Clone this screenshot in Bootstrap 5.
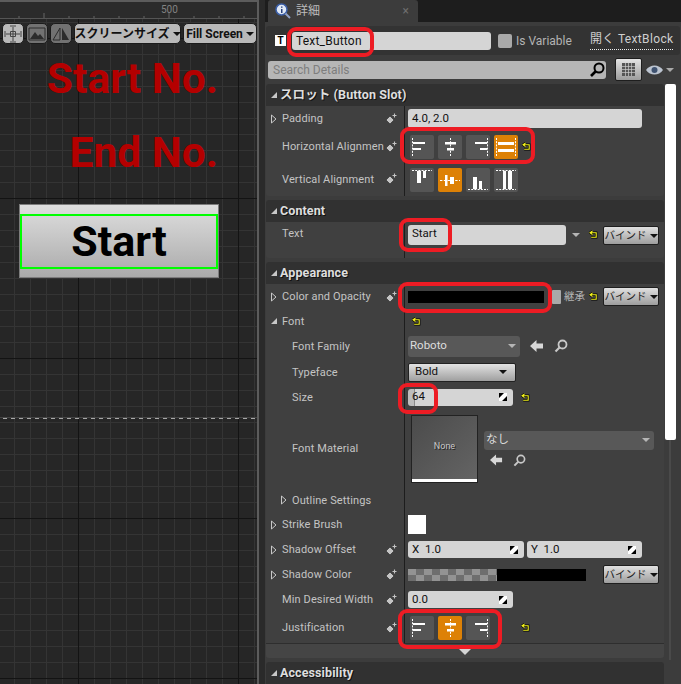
<!DOCTYPE html>
<html lang="ja">
<head>
<meta charset="UTF-8">
<title>UMG Details</title>
<link rel="stylesheet" href="https://cdn.jsdelivr.net/npm/bootstrap@5.3.2/dist/css/bootstrap.min.css">
<style>
html, body { height: 684px; overflow: hidden; }
body { background: #3c3c3c; font-family: Roboto, "Noto Sans CJK JP", sans-serif; font-size: 11px; color: #c8c8c8; position: relative; }

/* designer canvas */
.designer { width: 265px; height: 684px; background: #2a2a2a; flex: none; }
.canvas { width: 257px; height: 684px; position: relative; background-color: #262626; border-top: 2px solid #5c5c5c; }
.gridlayer { position: absolute; inset: 0;
  background-image:
    linear-gradient(#131313 1px, transparent 1px), linear-gradient(90deg, #131313 1px, transparent 1px),
    linear-gradient(#343434 1px, transparent 1px), linear-gradient(90deg, #343434 1px, transparent 1px);
  background-size: 160px 160px, 160px 160px, 16px 16px, 16px 16px;
  background-position: 0 36px, 78px 0, 0 4px, 14px 0; }
.split-bar { width: 2px; background: #5c5c5c; flex: none; }
.ruler { position: relative; height: 17px; background: #2b2b2b; border-bottom: 1px solid #555; display: block; width: 257px; }
.ruler text { font: 10px Roboto, sans-serif; fill: #828282; }
.tools { position: relative; padding: 4px 0 0 2px; gap: 2px; }
.tool { height: 21px; border-radius: 5px; background: #b9b9b9; border: 1px solid #1b1b1b; color: #111; font-weight: 700; font-size: 12px; white-space: nowrap; }
.tool-ic { width: 22px; }
.tool-dim { background: #727272; }
.tool-w1 { width: 107px; }
.tool-w2 { width: 74px; }
.caret-b { width: 0; height: 0; border-left: 4px solid transparent; border-right: 4px solid transparent; border-top: 4px solid #111; margin-left: 3px; flex: none; }
.canvas-title { position: absolute; right: 39px; color: #b40000; font-weight: 700; font-size: 42.5px; line-height: 48px; white-space: nowrap; }
.ct-a { top: 53px; }
.ct-b { top: 127px; }
.preview-btn { position: absolute; left: 19px; top: 202px; width: 200px; height: 74px; border: 1px solid #7c7c7c; background: linear-gradient(#dedede, #aaa); }
.preview-sel { position: absolute; left: 0; top: 9px; width: 198px; height: 55px; border: 2px solid #00ff00; color: #000; font-weight: 700; font-size: 43px; }
.dashline { position: absolute; left: 3px; right: 1px; top: 416px; height: 1px; background-image: linear-gradient(90deg, #a8a8a8 4px, transparent 4px); background-size: 8px 1px; }
.dashtop { position: absolute; left: 0; right: 0; top: 415px; height: 1px; background: #454545; }

/* details panel */
.panel { width: 416px; flex: none; }
.tabbar { height: 22px; background: #1d1d1d; padding-left: 3px; }
.dtab { width: 150px; height: 22px; background: #3c3c3c; border-radius: 3px 3px 0 0; padding-left: 7px; color: #bdbdbd; font-size: 12px; gap: 5px; }
.dtab-x { margin-left: auto; margin-right: 9px; color: #6e6e6e; font-size: 12px; }
.namebar { height: 29px; margin: 4px 1px 0 1px; background: #333; border-radius: 3px; padding-left: 9px; }
.t-ic { width: 11px; height: 11px; background: #fff; color: #000; font: 700 10px/11px "Liberation Sans", sans-serif; text-align: center; flex: none; }
.field { background: #d5d5d5; color: #111; border-radius: 3px; font-size: 11.5px; padding-left: 4px; white-space: nowrap; }
.f-name { width: 199px; height: 18px; margin-left: 6px; padding-left: 4px; font-size: 12px; letter-spacing: .2px; }
.chk { width: 14px; height: 14px; background: #a9a9a9; border-radius: 2px; margin-left: 7px; flex: none; }
.isvar { margin-left: 4px; font-size: 12px; color: #b4b4b4; }
.opener { margin-left: 18px; font-size: 12px; color: #cfcfcf; border-bottom: 1px dotted #eee; height: 19px; line-height: 17px; white-space: nowrap; letter-spacing: .35px; }
.searchbar { height: 29px; padding: 0 0 0 3px; }
.searchbox { width: 338px; height: 18px; background: #b6b6b6; border-radius: 3px; color: #7e7e7e; font-size: 12px; padding-left: 5px; }
.searchbox svg { margin-left: auto; margin-right: 1px; }
.viewbtn { width: 27px; height: 23px; margin-left: 9px; border: 1px solid #1e1e1e; background: linear-gradient(#e4e4e4, #9c9c9c); border-radius: 2px; }
.eyeicon { margin-left: 4px; }
.section { width: 398px; margin-left: 1px; margin-bottom: 4px; background: #404040; border-radius: 3px; }
.sec-head { height: 22px; background: #313131; color: #dedede; font-weight: 700; font-size: 12.5px; padding-left: 4px; border-radius: 3px 3px 0 0; gap: 2px; letter-spacing: .1px; text-shadow: 1px 1px 0 #111; }
.prop { display: flex; }
.pn { width: 138px; flex: none; display: flex; align-items: center; padding-left: 4px; }
.pn-deep { padding-left: 14px; }
.pn-label { flex: 1; min-width: 0; padding-top: 1px; white-space: nowrap; letter-spacing: .12px; color: #c4c4c4; }
.pn-label.lbl-low { padding-top: 3px; }
.arr { width: 12px; flex: none; line-height: 0; }
.dia { flex: none; margin: 0 7px 0 0; }
.pv { flex: 1; border-left: 1px solid #1d1d1d; padding-left: 3px; display: flex; align-items: center; min-width: 0; }
.pn.pn-top, .pv.pn-top { padding-top: 3px; align-items: flex-start; }
.h-a { height: 25px; } .h-b { height: 31px; } .h-c { height: 34px; } .h-c2 { height: 36px; } .h-d { height: 24px; } .h-e { height: 26px; } .h-f { height: 77px; } .h-h { height: 15px; }
.alignbtn { width: 24px; height: 24px; background: #555; border-radius: 2px; margin-right: 4px; flex: none; }
.alignbtn.on { background: #dd8106; }
.aligns { padding-left: 5px; }
.v-nudge { padding-top: 2px; }
.reset { flex: none; }
.reset-just { margin-left: 27px; }
.bindbtn { width: 56px; height: 19px; background: linear-gradient(#e0e0e0, #9d9d9d); border: 1px solid #1e1e1e; border-radius: 2px; color: #222; font-size: 10.5px; flex: none; white-space: nowrap; }
.f-pad { width: 234px; height: 19px; }
.f-text { width: 158px; height: 20px; }
.f-size { background: linear-gradient(90deg, #bdbdbd 6px, #8c8c8c 6px, #8c8c8c 7px, #d5d5d5 7px); }
.sm-caret { width: 0; height: 0; border-left: 4px solid transparent; border-right: 4px solid transparent; border-top: 4px solid #b5b5b5; flex: none; }
.caret-gap { margin: 8px 9px 0 6px; }
.reset-top { margin-top: 5px; }
.ml-5px { margin-left: 5px; }
.mt-1px { margin-top: 1px; }
.ml-17 { margin-left: 17px; }
.colorbar { width: 136px; height: 12px; background: #000; flex: none; }
.chk-sm { width: 9px; height: 14px; background: #a9a9a9; border-radius: 1px; margin-left: 8px; flex: none; }
.inherit { margin-left: 3px; color: #b4b4b4; font-size: 10.5px; white-space: nowrap; }
.sel-dark { background: #585858; color: #ddd; border-radius: 3px; padding: 0 4px 0 2px; font-size: 11.5px; }
.sel-a { width: 112px; height: 21px; }
.sel-b { width: 170px; height: 19px; }
.sel-light { width: 108px; height: 19px; margin-top: 1px; background: linear-gradient(#e2e2e2, #9f9f9f); border-radius: 2px; color: #111; font-size: 11.5px; padding: 0 8px 0 6px; border: 1px solid #222; }
.f-num { width: 105px; height: 17px; }
.f-half { width: 116px; height: 17px; margin-right: 3px; }
.f-half-b { width: 115px; height: 17px; }
.sz-ic { margin-left: auto; margin-right: 5px; flex: none; }
.thumb { width: 65px; height: 66px; margin-left: 4px; background: linear-gradient(135deg, #4b4b4b, #646464); box-shadow: 0 0 0 1px #222; border-bottom: 3px solid #fff; color: #c8c8c8; font-size: 9px; flex: none; text-shadow: 1px 1px 0 #222; }
.mat-side { margin-left: 7px; }
.mat-icons { margin-top: 4px; padding-left: 6px; gap: 10px; }
.ic-gap { margin-left: 10px; }
.swatch { width: 18px; height: 19px; background: #fff; }
.checker { width: 178px; height: 12px; background: #000; flex: none; }
.checker-b { width: 89px; height: 12px; background-image: conic-gradient(#6e6e6e 25%, #939393 0 50%, #6e6e6e 0 75%, #939393 0); background-size: 16px 12px; }
.expand { border-top: 1px solid #2e2e2e; background: #454545; border-radius: 0 0 3px 3px; padding-top: 2px; }
.exp-ar { width: 0; height: 0; border-left: 6px solid transparent; border-right: 6px solid transparent; border-top: 6px solid #d4d4d4; }
.scrolltrack { position: absolute; left: 669px; top: 84px; width: 2px; height: 576px; background: #4a4a4a; }
.scrollthumb { position: absolute; left: 665px; top: 84px; width: 11px; height: 356px; background: #fff; border-radius: 2px; }
.mark-red { position: absolute; border: 4px solid #ed1c24; border-radius: 9px; pointer-events: none; }
.m1 { left: 287px; top: 27px; width: 87px; height: 30px; }
.m2 { left: 400px; top: 127px; width: 135px; height: 37px; }
.m3 { left: 399px; top: 218px; width: 53px; height: 34px; }
.m4 { left: 398px; top: 282px; width: 154px; height: 31px; }
.m5 { left: 398px; top: 383px; width: 40px; height: 31px; }
.m6 { left: 398px; top: 609px; width: 104px; height: 40px; }
</style>
</head>
<body>
<svg width="0" height="0" class="position-absolute">
  <defs>
    <symbol id="al-left" viewBox="0 0 24 24"><path d="M2.500 3V21" stroke="#fff" stroke-dasharray="2 1.200" fill="none"/><path d="M3 7h12v2H3zM3 13h8v2H3z" fill="#fff"/></symbol>
    <symbol id="al-center" viewBox="0 0 24 24"><path d="M12.500 3V21" stroke="#fff" stroke-dasharray="2 1.200" fill="none"/><path d="M7 7h11v2.500H7zM9 13h7v2.500H9z" fill="#fff"/></symbol>
    <symbol id="al-right" viewBox="0 0 24 24"><path d="M21.500 3V21" stroke="#fff" stroke-dasharray="2 1.200" fill="none"/><path d="M9 7h12v2H9zM14 13h7v2h-7z" fill="#fff"/></symbol>
    <symbol id="al-fill" viewBox="0 0 24 24"><path d="M2.500 3V21M21.500 3V21" stroke="#fff" stroke-dasharray="2 1.200" fill="none"/><path d="M4 7h16v3H4zM4 14h16v3H4z" fill="#fff"/></symbol>
    <symbol id="va-top" viewBox="0 0 24 24"><path d="M2 2.500H22" stroke="#fff" stroke-dasharray="2 1.200" fill="none"/><path d="M7 3h4v12H7zM13 3h3v7h-3z" fill="#fff"/></symbol>
    <symbol id="va-center" viewBox="0 0 24 24"><path d="M2 12.500H22" stroke="#fff" stroke-dasharray="2.400 1.400" fill="none"/><path d="M7 7h2.500v11H7zM12 9h4v7h-4z" fill="#fff"/></symbol>
    <symbol id="va-bottom" viewBox="0 0 24 24"><path d="M2 21.500H22" stroke="#fff" stroke-dasharray="2 1.200" fill="none"/><path d="M7 9h4v12H7zM13 13h3v8h-3z" fill="#fff"/></symbol>
    <symbol id="va-fill" viewBox="0 0 24 24"><path d="M2 2.500H22M2 21.500H22" stroke="#fff" stroke-dasharray="2 1.200" fill="none"/><path d="M9 3h3v18H9zM14 3h4v18h-4z" fill="#fff"/></symbol>
    <symbol id="ic-reset" viewBox="0 0 9 9"><path d="M3.500 1 1 2.800 3.500 4.600M1.500 2.800H7.200V7.300H2.200" fill="none" stroke="#000" stroke-width="2.400"/><path d="M3.500 1 1 2.800 3.500 4.600M1.500 2.800H7.200V7.300H2.200" fill="none" stroke="#f4f41e" stroke-width="1.100"/></symbol>
    <symbol id="ic-dia" viewBox="0 0 12 12"><path d="M5 3 9 7 5 11 1 7z" fill="#c4c4c4" stroke="#222" stroke-width=".6"/><path d="M9.500 .5v4M7.500 2.500h4" stroke="#c4c4c4" stroke-width="1.100"/></symbol>
    <symbol id="ic-size" viewBox="0 0 10 10"><path d="M1 1h8v8H1z" fill="#fff"/><path d="M1 1h5L1 6zM9 9H4l5-5z" fill="#000"/></symbol>
    <symbol id="ic-right" viewBox="0 0 8 10"><path d="M1.500 1 6 5 1.500 9z" fill="none" stroke="#c8c8c8"/></symbol>
    <symbol id="ic-open" viewBox="0 0 8 8"><path d="M7 1V7H1z" fill="#c8c8c8"/></symbol>
    <symbol id="ic-back" viewBox="0 0 14 12"><path d="M6.500 0 0 6l6.500 6V8.500H13v-5H6.500z" fill="#d8d8d8"/></symbol>
    <symbol id="ic-find" viewBox="0 0 14 14"><circle cx="8.500" cy="5.500" r="4" fill="none" stroke="#c8c8c8" stroke-width="1.800"/><path d="M5.500 8.500 1.500 12.500" stroke="#c8c8c8" stroke-width="2.200"/></symbol>
  </defs>
</svg>

<div class="d-flex">
  <!-- left: designer -->
  <div class="designer d-flex">
    <div class="canvas">
      <div class="gridlayer"></div>
      <svg class="ruler" width="257" height="17">
        <path d="M19 14V17M44 11V17M69 14V17M94 14V17M119 14V17M144 14V17M169 11V17M194 14V17M219 14V17M244 14V17" stroke="#666" fill="none"/>
        <text x="161" y="11">500</text>
      </svg>
      <div class="tools d-flex">
        <div class="tool tool-ic d-flex align-items-center justify-content-center">
          <svg width="18" height="18" viewBox="0 0 18 18" fill="none" stroke="#444"><path d="M9 2V16M2 9H16M6.500 6.500h5v5h-5zM1 6v6M17 6v6M6 1h6M6 17h6"/></svg>
        </div>
        <div class="tool tool-ic tool-dim d-flex align-items-center justify-content-center">
          <svg width="18" height="14" viewBox="0 0 18 14"><path d="M1 1h16v12H1z" fill="none" stroke="#2c2c2c"/><path d="M2 12 7 5l3 4 2-2 4 5z" fill="#2c2c2c"/></svg>
        </div>
        <div class="tool tool-ic tool-dim d-flex align-items-center justify-content-center">
          <svg width="18" height="14" viewBox="0 0 18 14"><path d="M8 1V13H1z" fill="none" stroke="#2c2c2c"/><path d="M10 1V13H17z" fill="#2c2c2c"/></svg>
        </div>
        <div class="tool tool-w1 d-flex align-items-center justify-content-center">スクリーンサイズ<span class="caret-b"></span></div>
        <div class="tool tool-w2 d-flex align-items-center justify-content-center">Fill Screen<span class="caret-b"></span></div>
      </div>
      <div class="canvas-title ct-a">Start No.</div>
      <div class="canvas-title ct-b">End No.</div>
      <div class="preview-btn">
        <div class="preview-sel d-flex align-items-center justify-content-center">Start</div>
      </div>
      <div class="dashtop"></div>
      <div class="dashline"></div>
    </div>
    <div class="split-bar"></div>
  </div>

  <!-- right: details -->
  <div class="panel">
    <div class="tabbar d-flex">
      <div class="dtab d-flex align-items-center">
        <svg width="16" height="16" viewBox="0 0 16 16"><circle cx="6.500" cy="6.500" r="5.500" fill="#dfe8f5" stroke="#3b5fa8" stroke-width="1.500"/><path d="M6 3.500h1.500v1.300H6zM6 6h1.500v4H6z" fill="#26407e"/><path d="M10.500 10.500 15 15" stroke="#8fa2c8" stroke-width="2"/></svg>
        <span>詳細</span>
        <span class="dtab-x">×</span>
      </div>
    </div>
    <div class="namebar d-flex align-items-center">
      <div class="t-ic">T</div>
      <div class="field f-name d-flex align-items-center">Text_Button</div>
      <div class="chk"></div>
      <div class="isvar">Is Variable</div>
      <div class="opener">開く TextBlock</div>
    </div>
    <div class="searchbar d-flex align-items-center">
      <div class="searchbox d-flex align-items-center">Search Details
        <svg width="16" height="16" viewBox="0 0 16 16"><circle cx="10" cy="6" r="4.500" fill="none" stroke="#000" stroke-width="2"/><path d="M6.500 9.500 2 14" stroke="#000" stroke-width="2.600"/></svg>
      </div>
      <div class="viewbtn d-flex align-items-center justify-content-center">
        <svg width="15" height="15" viewBox="0 0 15 15"><path d="M1 1h13v13H1z" fill="#555"/><path d="M1 4.500h13M1 7.500h13M1 10.500h13M4.500 1v13M7.500 1v13M10.500 1v13" stroke="#ccc" stroke-width=".7"/></svg>
      </div>
      <svg class="eyeicon" width="28" height="12" viewBox="0 0 28 12"><path d="M0 6C4 0 13 0 17 6 13 12 4 12 0 6z" fill="#bcc4d0"/><circle cx="8.500" cy="6" r="3" fill="#3f5270"/><path d="M20 4h8l-4 4z" fill="#aaa"/></svg>
    </div>

    <!-- slot -->
    <div class="section">
      <div class="sec-head d-flex align-items-center"><svg width="8" height="8"><use href="#ic-open"/></svg>スロット (Button Slot)</div>
      <div class="prop h-a">
        <div class="pn"><span class="arr"><svg width="8" height="10"><use href="#ic-right"/></svg></span><span class="pn-label">Padding</span><svg class="dia" width="12" height="12"><use href="#ic-dia"/></svg></div>
        <div class="pv"><div class="field f-pad d-flex align-items-center">4.0, 2.0</div></div>
      </div>
      <div class="prop h-b">
        <div class="pn"><span class="arr"></span><span class="pn-label">Horizontal Alignmen</span><svg class="dia" width="12" height="12"><use href="#ic-dia"/></svg></div>
        <div class="pv aligns">
          <div class="alignbtn"><svg width="24" height="24"><use href="#al-left"/></svg></div>
          <div class="alignbtn"><svg width="24" height="24"><use href="#al-center"/></svg></div>
          <div class="alignbtn"><svg width="24" height="24"><use href="#al-right"/></svg></div>
          <div class="alignbtn on"><svg width="24" height="24"><use href="#al-fill"/></svg></div>
          <svg class="reset" width="9" height="9"><use href="#ic-reset"/></svg>
        </div>
      </div>
      <div class="prop h-c">
        <div class="pn"><span class="arr"></span><span class="pn-label lbl-low">Vertical Alignment</span><svg class="dia" width="12" height="12"><use href="#ic-dia"/></svg></div>
        <div class="pv aligns v-nudge">
          <div class="alignbtn"><svg width="24" height="24"><use href="#va-top"/></svg></div>
          <div class="alignbtn on"><svg width="24" height="24"><use href="#va-center"/></svg></div>
          <div class="alignbtn"><svg width="24" height="24"><use href="#va-bottom"/></svg></div>
          <div class="alignbtn"><svg width="24" height="24"><use href="#va-fill"/></svg></div>
        </div>
      </div>
    </div>

    <!-- content -->
    <div class="section">
      <div class="sec-head d-flex align-items-center"><svg width="8" height="8"><use href="#ic-open"/></svg>Content</div>
      <div class="prop h-c2">
        <div class="pn pn-top"><span class="arr"></span><span class="pn-label">Text</span></div>
        <div class="pv pn-top">
          <div class="field f-text">Start</div>
          <span class="sm-caret caret-gap"></span>
          <svg class="reset reset-top" width="9" height="9"><use href="#ic-reset"/></svg>
          <div class="bindbtn d-flex align-items-center justify-content-center ml-5px mt-1px">バインド<span class="caret-b"></span></div>
        </div>
      </div>
    </div>

    <!-- appearance -->
    <div class="section">
      <div class="sec-head d-flex align-items-center"><svg width="8" height="8"><use href="#ic-open"/></svg>Appearance</div>
      <div class="prop h-a">
        <div class="pn"><span class="arr"><svg width="8" height="10"><use href="#ic-right"/></svg></span><span class="pn-label">Color and Opacity</span><svg class="dia" width="12" height="12"><use href="#ic-dia"/></svg></div>
        <div class="pv">
          <div class="colorbar"></div><div class="chk-sm"></div><span class="inherit">継承</span>
          <svg class="reset ms-1" width="9" height="9"><use href="#ic-reset"/></svg>
          <div class="bindbtn d-flex align-items-center justify-content-center ml-5px">バインド<span class="caret-b"></span></div>
        </div>
      </div>
      <div class="prop h-d">
        <div class="pn"><span class="arr"><svg width="8" height="8"><use href="#ic-open"/></svg></span><span class="pn-label lbl-low">Font</span></div>
        <div class="pv"><svg class="reset ms-1" width="9" height="9"><use href="#ic-reset"/></svg></div>
      </div>
      <div class="prop h-e">
        <div class="pn pn-deep"><span class="arr"></span><span class="pn-label lbl-low">Font Family</span></div>
        <div class="pv">
          <div class="sel-dark sel-a d-flex align-items-center justify-content-between">Roboto<span class="sm-caret"></span></div>
          <svg class="ic-gap" width="14" height="12"><use href="#ic-back"/></svg>
          <svg class="ic-gap" width="14" height="14"><use href="#ic-find"/></svg>
        </div>
      </div>
      <div class="prop h-a">
        <div class="pn pn-deep"><span class="arr"></span><span class="pn-label lbl-low">Typeface</span></div>
        <div class="pv"><div class="sel-light d-flex align-items-center justify-content-between">Bold<span class="caret-b"></span></div></div>
      </div>
      <div class="prop h-e">
        <div class="pn pn-deep"><span class="arr"></span><span class="pn-label lbl-low">Size</span></div>
        <div class="pv">
          <div class="field f-num f-size d-flex align-items-center">64<svg class="sz-ic" width="10" height="10"><use href="#ic-size"/></svg></div>
          <svg class="reset ms-2" width="9" height="9"><use href="#ic-reset"/></svg>
        </div>
      </div>
      <div class="prop h-f">
        <div class="pn pn-deep"><span class="arr"></span><span class="pn-label">Font Material</span></div>
        <div class="pv">
          <div class="thumb d-flex align-items-center justify-content-center">None</div>
          <div class="mat-side">
            <div class="sel-dark sel-b d-flex align-items-center justify-content-between">なし<span class="sm-caret"></span></div>
            <div class="d-flex align-items-center mat-icons">
              <svg width="13" height="12"><use href="#ic-back"/></svg>
              <svg width="13" height="13"><use href="#ic-find"/></svg>
            </div>
          </div>
        </div>
      </div>
      <div class="prop h-a">
        <div class="pn pn-deep"><span class="arr"><svg width="8" height="10"><use href="#ic-right"/></svg></span><span class="pn-label lbl-low">Outline Settings</span></div>
        <div class="pv"></div>
      </div>
      <div class="prop h-a">
        <div class="pn"><span class="arr"><svg width="8" height="10"><use href="#ic-right"/></svg></span><span class="pn-label">Strike Brush</span></div>
        <div class="pv"><div class="swatch"></div></div>
      </div>
      <div class="prop h-a">
        <div class="pn"><span class="arr"><svg width="8" height="10"><use href="#ic-right"/></svg></span><span class="pn-label">Shadow Offset</span><svg class="dia" width="12" height="12"><use href="#ic-dia"/></svg></div>
        <div class="pv">
          <div class="field f-half d-flex align-items-center">X&nbsp;&nbsp;1.0<svg class="sz-ic" width="10" height="10"><use href="#ic-size"/></svg></div>
          <div class="field f-half-b d-flex align-items-center">Y&nbsp;&nbsp;1.0<svg class="sz-ic" width="10" height="10"><use href="#ic-size"/></svg></div>
        </div>
      </div>
      <div class="prop h-a">
        <div class="pn"><span class="arr"><svg width="8" height="10"><use href="#ic-right"/></svg></span><span class="pn-label">Shadow Color</span><svg class="dia" width="12" height="12"><use href="#ic-dia"/></svg></div>
        <div class="pv">
          <div class="checker"><div class="checker-b"></div></div>
          <div class="bindbtn d-flex align-items-center justify-content-center ml-17">バインド<span class="caret-b"></span></div>
        </div>
      </div>
      <div class="prop h-a">
        <div class="pn"><span class="arr"></span><span class="pn-label">Min Desired Width</span><svg class="dia" width="12" height="12"><use href="#ic-dia"/></svg></div>
        <div class="pv"><div class="field f-num d-flex align-items-center">0.0<svg class="sz-ic" width="10" height="10"><use href="#ic-size"/></svg></div></div>
      </div>
      <div class="prop h-b">
        <div class="pn"><span class="arr"></span><span class="pn-label">Justification</span><svg class="dia" width="12" height="12"><use href="#ic-dia"/></svg></div>
        <div class="pv aligns">
          <div class="alignbtn"><svg width="24" height="24"><use href="#al-left"/></svg></div>
          <div class="alignbtn on"><svg width="24" height="24"><use href="#al-center"/></svg></div>
          <div class="alignbtn"><svg width="24" height="24"><use href="#al-right"/></svg></div>
          <svg class="reset reset-just" width="9" height="9"><use href="#ic-reset"/></svg>
        </div>
      </div>
      <div class="expand h-h d-flex justify-content-center align-items-center"><span class="exp-ar"></span></div>
    </div>

    <div class="section">
      <div class="sec-head d-flex align-items-center"><svg width="8" height="8"><use href="#ic-open"/></svg>Accessibility</div>
    </div>
  </div>
</div>

<!-- scrollbar + red annotation marks lie over the panel -->
<div class="scrolltrack"></div>
<div class="scrollthumb"></div>
<div class="mark-red m1"></div>
<div class="mark-red m2"></div>
<div class="mark-red m3"></div>
<div class="mark-red m4"></div>
<div class="mark-red m5"></div>
<div class="mark-red m6"></div>

<script src="https://cdn.jsdelivr.net/npm/bootstrap@5.3.2/dist/js/bootstrap.bundle.min.js"></script>
</body>
</html>
